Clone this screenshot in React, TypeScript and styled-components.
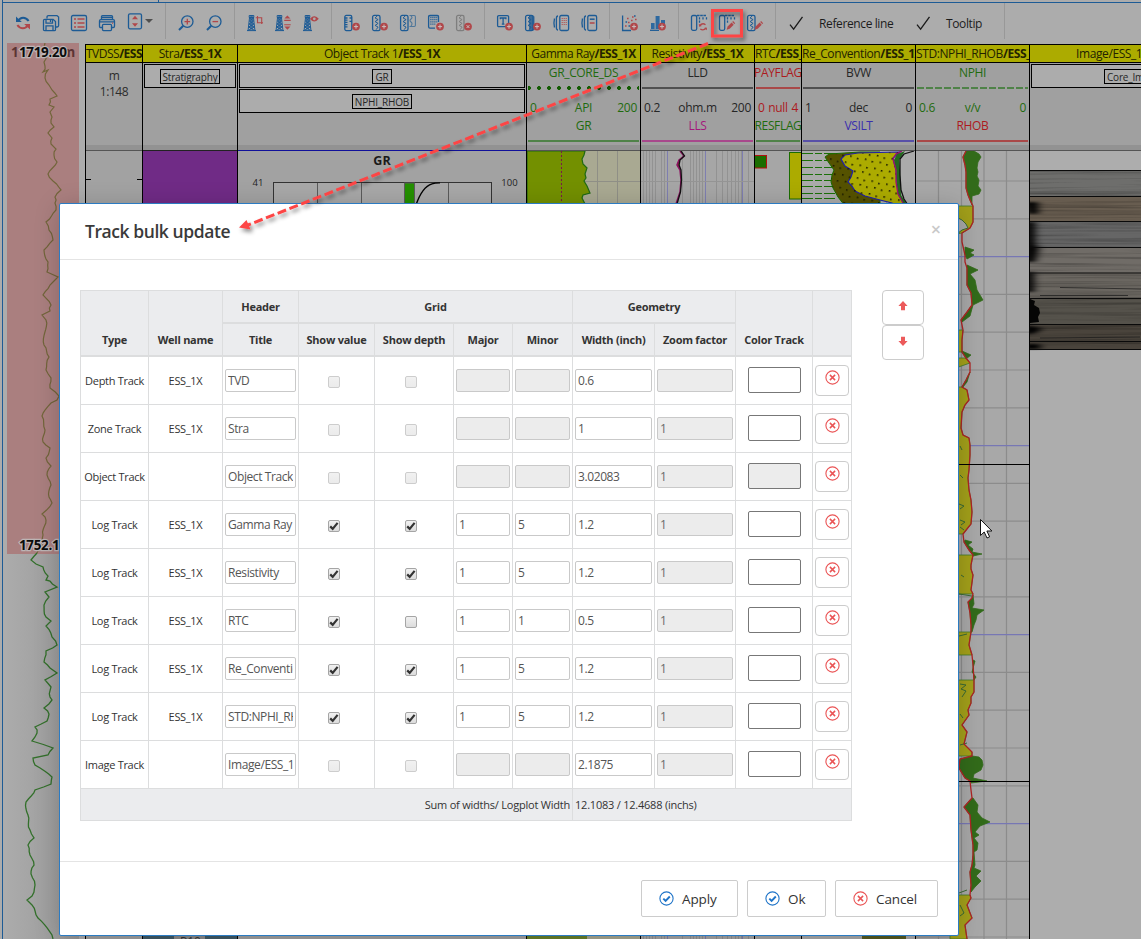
import React from "react";
import styled, { createGlobalStyle, css } from "styled-components";

const BLUE = "#1d5b95";
const RED = "#b0474a";
const LINE = "#dcddde";

const Global = createGlobalStyle`
  *, *::before, *::after { box-sizing: border-box; }
  body { margin: 0; background: #acacac; overflow: hidden; }
  body, input, button { font-family: "Open Sans", "Noto Sans", sans-serif; }
`;

/* ---------- page shell ---------- */

const Page = styled.div`
  position: relative;
  width: 1141px;
  height: 939px;
  overflow: hidden;
  background: #acacac;
  display: flex;
  flex-direction: column;
`;

const TabStrip = styled.div`
  height: 3px;
  flex: none;
  margin-left: 2px;
  border-left: 1px solid ${BLUE};
  border-bottom: 1px solid ${BLUE};
  display: flex;
`;

const TabEdge = styled.i`
  width: 156px;
  border-right: 1px solid ${BLUE};
`;

const Frame = styled.div`
  flex: 1;
  min-height: 0;
  margin-left: 2px;
  border-left: 1px solid ${BLUE};
  display: flex;
  flex-direction: column;
`;

const Toolbar = styled.div`
  height: 40px;
  flex: none;
  display: flex;
  align-items: flex-start;
`;

const Group = styled.div<{ $w?: number }>`
  height: 36px;
  padding: 0 6px;
  display: flex;
  align-items: center;
  flex: none;
  border-right: 1px solid #989898;
  ${(p) => p.$w && `width: ${p.$w}px;`}
`;

const Tool = styled.button`
  width: 28px;
  height: 36px;
  padding: 10px 4px 0;
  border: 0;
  background: none;
  display: flex;
  align-items: flex-start;
  justify-content: center;
  svg { display: block; flex: none; }
`;

const Caret = styled.i`
  border: 4px solid transparent;
  border-top-color: #4f4f4f;
  border-bottom: 0;
  margin: 0 0 0 -4px;
`;

const Toggle = styled.label<{ $w: number }>`
  display: flex;
  align-items: center;
  width: ${(p) => p.$w}px;
  padding-left: 7px;
  padding-top: 5px;
  font-size: 12px;
  color: #1c1c1c;
  white-space: nowrap;
  letter-spacing: -0.38px;
  svg { margin-right: 15px; flex: none; }
`;

const Workspace = styled.div`
  flex: 1;
  min-height: 0;
  display: flex;
`;

const Overview = styled.div`
  width: 76px;
  margin-left: 4px;
  margin-right: 2px;
  flex: none;
  svg { display: block; }
`;

/* ---------- log tracks ---------- */

const Tracks = styled.div`
  display: flex;
  flex: none;
  border-left: 1px solid #000;
  margin-top: 1px;
`;

const TrackCol = styled.section<{ $w: number }>`
  width: ${(p) => p.$w}px;
  flex: none;
  border-right: 1px solid #000;
  overflow: hidden;
  svg { display: block; }
`;

const TrackTitle = styled.h3<{ $pad?: number; $ls?: number }>`
  margin: 0;
  height: 19px;
  overflow: hidden;
  border-top: 1px solid #000;
  border-bottom: 1px solid #000;
  background: #acab00;
  color: #232300;
  font-size: 12px;
  font-weight: 400;
  line-height: 18px;
  letter-spacing: ${(p) => p.$ls ?? -0.4}px;
  white-space: nowrap;
  display: flex;
  justify-content: ${(p) => (p.$pad === undefined ? "center" : "flex-start")};
  padding-left: ${(p) => p.$pad ?? 0}px;
  b { font-weight: 700; }
`;

const TrackHead = styled.div`
  height: 87px;
  background: #a0a0a0;
  border-bottom: 5px solid #929292;
  padding: 1px;
  display: flex;
  flex-direction: column;
  color: #262626;
  font-size: 12px;
`;

const DepthUnit = styled.div`
  padding-top: 4px;
  text-align: center;
  line-height: 16px;
  color: #2c2c2c;
  letter-spacing: -0.4px;
`;

const ObjectBox = styled.div<{ $pad?: number }>`
  height: 24px;
  flex: none;
  margin: 0 0 1px;
  border: 1px solid #000;
  background: #acacac;
  display: flex;
  align-items: flex-start;
  justify-content: ${(p) => (p.$pad ? "flex-start" : "center")};
  padding: 4px 0 0 ${(p) => p.$pad ?? 0}px;
`;

const Tag = styled.span`
  height: 15px;
  border: 1px solid #000;
  padding: 0 2px;
  font-size: 10px;
  line-height: 14px;
  letter-spacing: -0.18px;
  white-space: nowrap;
`;

const CurveName = styled.div<{ $c: string }>`
  height: 18px;
  flex: none;
  line-height: 18px;
  color: ${(p) => p.$c};
  font-size: 12px;
  letter-spacing: -0.35px;
  white-space: nowrap;
  display: flex;
  justify-content: center;
`;

const CurveRule = styled.i<{ $c: string; $kind?: "dots" | "dash" }>`
  height: 2px;
  display: block;
  flex: none;
  margin-top: 5px;
  background: ${(p) =>
    p.$kind === "dash"
      ? `repeating-linear-gradient(90deg, ${p.$c} 0 7px, transparent 7px 9px)`
      : p.$c};
  ${(p) =>
    p.$kind === "dots" &&
    css`
      height: 4px;
      margin: 4px 0 -1px;
      background: radial-gradient(circle, ${p.$c} 1.7px, transparent 2.2px) -4px 0 / 10px 4px repeat-x;
    `}
`;

const ScaleRow = styled.div<{ $c: string }>`
  display: grid;
  grid-template-columns: 1fr auto 1fr;
  padding: 0 2px;
  margin-top: 10px;
  height: 18px;
  flex: none;
  line-height: 18px;
  color: ${(p) => p.$c};
  font-size: 12px;
  letter-spacing: -0.3px;
  white-space: nowrap;
  span:last-child { text-align: right; }
`;

/* ---------- dialog ---------- */

const Dialog = styled.div`
  position: absolute;
  left: 59px;
  top: 203px;
  width: 900px;
  height: 733px;
  background: #fff;
  border: 1px solid #2b7bc2;
  border-radius: 2px;
  box-shadow: 0 4px 26px rgba(0, 0, 0, 0.2);
  display: flex;
  flex-direction: column;
`;

const DialogHead = styled.header`
  height: 56px;
  flex: none;
  border-bottom: 1px solid #e4e4e4;
  padding: 0 15px 2px 25px;
  display: flex;
  justify-content: space-between;
  align-items: center;
`;

const DialogTitle = styled.h2`
  margin: 0;
  font-size: 17.5px;
  font-weight: 550;
  letter-spacing: -0.43px;
  color: #3a3a3a;
`;

const CloseButton = styled.button`
  border: 0;
  background: none;
  padding: 0;
  width: 14px;
  font-size: 18px;
  font-weight: 600;
  line-height: 18px;
  color: #c9c9c9;
  margin-top: -4px;
`;

const DialogBody = styled.div`
  flex: 1;
  display: flex;
  align-items: flex-start;
  padding: 30px 0 0 20px;
`;

const Sheet = styled.div`
  display: grid;
  grid-template-columns: 68px 74px 76px 76px 79px 59px 60px 82px 81px 77px 39px;
  grid-template-rows: 33px 33px repeat(9, 48px) 32px;
  border-top: 1px solid ${LINE};
  border-right: 1px solid ${LINE};
  font-size: 11.5px;
  color: #333;
`;

const HeadCell = styled.div<{ $span?: number; $tall?: boolean }>`
  grid-column: span ${(p) => p.$span ?? 1};
  grid-row: span ${(p) => (p.$tall ? 2 : 1)};
  background: #ebecee;
  border-left: 1px solid ${LINE};
  border-bottom: 2px solid ${LINE};
  display: flex;
  align-items: flex-end;
  justify-content: center;
  padding-bottom: 7px;
  font-size: 11px;
  font-weight: 700;
  line-height: 16px;
  letter-spacing: -0.25px;
  white-space: nowrap;
`;

const Cell = styled.div`
  border-left: 1px solid ${LINE};
  border-bottom: 1px solid ${LINE};
  padding: 0 2px;
  display: flex;
  align-items: center;
  justify-content: center;
  min-width: 0;
`;

const Label = styled.span`
  font-size: 11px;
  letter-spacing: -0.3px;
  padding-bottom: 1px;
  white-space: nowrap;
`;

const FootCell = styled.div<{ $span: number; $end?: boolean }>`
  grid-column: span ${(p) => p.$span};
  background: #ebecee;
  border-left: 1px solid ${LINE};
  border-bottom: 1px solid ${LINE};
  padding: 0 2px;
  display: flex;
  align-items: center;
  justify-content: ${(p) => (p.$end ? "flex-end" : "flex-start")};
  font-size: 11px;
  letter-spacing: -0.22px;
`;

const Field = styled.input`
  width: 100%;
  height: 23px;
  min-width: 0;
  border: 1px solid #c9c9c9;
  border-radius: 2px;
  padding: 0 2px;
  background: #fff;
  color: #555;
  font-size: 12px;
  letter-spacing: -0.4px;
  outline: 0;
  &:disabled { background: #ececec; color: #6b6b6b; }
`;

const Check = styled.span<{ $off?: boolean; $shift: number }>`
  width: 12px;
  height: 12px;
  margin: 3px ${(p) => p.$shift}px 0 0;
  border: 1px solid ${(p) => (p.$off ? "#cdcdcd" : "#a5a5a5")};
  border-radius: 2px;
  background: linear-gradient(#f1f1f1, ${(p) => (p.$off ? "#ebebeb" : "#dcdcdc")});
  display: flex;
  align-items: center;
  justify-content: center;
`;

const Swatch = styled.span<{ $off?: boolean }>`
  width: 53px;
  height: 26px;
  margin-bottom: 1px;
  border: 1px solid #777;
  border-radius: 2px;
  background: ${(p) => (p.$off ? "#ececec" : "#fff")};
`;

const SquareButton = styled.button<{ $w: number; $h: number; $lift?: number }>`
  width: ${(p) => p.$w}px;
  height: ${(p) => p.$h}px;
  flex: none;
  border: 1px solid #ccc;
  border-radius: 4px;
  background: #fff;
  padding: 0 0 ${(p) => p.$lift ?? 6}px;
  display: flex;
  align-items: center;
  justify-content: center;
`;

const OrderButtons = styled.div`
  margin-left: 30px;
  display: flex;
  flex-direction: column;
`;

const DialogFoot = styled.footer`
  height: 74px;
  flex: none;
  border-top: 1px solid #e4e4e4;
  display: flex;
  align-items: flex-start;
  justify-content: flex-end;
  gap: 9px;
  padding: 18px 20px 0 0;
`;

const ActionButton = styled.button<{ $w: number }>`
  width: ${(p) => p.$w}px;
  height: 37px;
  border: 1px solid #ccc;
  border-radius: 2px;
  background: #fff;
  color: #333;
  font-size: 13.5px;
  letter-spacing: -0.1px;
  display: flex;
  align-items: center;
  padding: 0 0 0 17px;
  gap: 8px;
  svg { flex: none; }
`;

const Annotation = styled.svg`
  position: absolute;
  left: 0;
  top: 0;
  pointer-events: none;
`;

/* ---------- icons ---------- */

const Ico = ({ children }: { children: React.ReactNode }) => (
  <svg width="20" height="20" viewBox="0 0 20 20" fill="none" stroke={BLUE} strokeWidth="1.300">
    {children}
  </svg>
);

const Plus = ({ cross }: { cross?: boolean }) => (
  <g>
    <circle cx="14" cy="13.6" r="3.9" fill={RED} stroke="none" />
    <path
      d={cross ? "M12.6 12.2l2.8 2.8M15.4 12.2l-2.8 2.8" : "M14 11.5v4.2M11.9 13.6h4.2"}
      stroke="#c9c0c0"
      strokeWidth="1"
    />
  </g>
);

const Log = ({ x = 2.6, color = BLUE }: { x?: number; color?: string }) => (
  <g stroke={color} transform={`translate(${x} 0)`}>
    <rect x="0" y="2.4" width="7.4" height="15.2" rx="1.6" />
    <path d="M4.5 3l-2 2 3 1.6-3 2 3 1.8-3 2 3 1.7-2 2.6" strokeWidth="1" />
  </g>
);

const Derrick = () => (
  <g strokeWidth="1">
    <path d="M4.6 4L3 18M8.400 4L10 18M2 17.6h9M4.2 2.5h4.6v2H4.2z" />
    <path d="M4.600 5l4 3-4.600 3 5.200 3-6 3.4M8.400 5l-4 3 4.600 3-5.400 3 6 3.4" />
    <path d="M6.5 3v13.500" strokeWidth="2.600" opacity=".75" />
  </g>
);

const Pencil = () => (
  <g stroke="none" fill={RED}>
    <path d="M9.6 16.8l1-3.200 4-4 2.100 2.100-4 4z" />
    <path d="M15.200 9l.9-.9 2.1 2.1-.9.9z" />
  </g>
);

const Columns = () => (
  <g>
    <rect x="2.5" y="2.5" width="5.2" height="14.8" rx="1.5" />
    <path d="M8 2.500h9.500" strokeDasharray="2.600 .6" />
    <path d="M10.500 4.200v2.300M14 4.200v2.300M17.500 4.200v2.300M10.500 7.500v2.300" />
  </g>
);

const icons: Record<string, React.ReactNode> = {
  refresh: (
    <>
      <path d="M5 8C7.5 3.6 12.6 3.6 15.6 8" strokeWidth="2.1" />
      <path d="M3 3.5v5.6h5.8z" fill={BLUE} stroke="none" />
      <path d="M15 12c-2.500 4.400-7.600 4.400-10.600 0" stroke={RED} strokeWidth="2.100" />
      <path d="M17 16.500v-5.600h-5.800z" fill={RED} stroke="none" />
    </>
  ),
  save: (
    <>
      <path d="M6 5.5V4q0-1.400 1.400-1.400H16L17.600 4v8.600q0 1.400-1.400 1.400H15" />
      <path d="M2.500 7.500q0-1.200 1.200-1.200h8.400L14.500 8.600v7.800q0 1.200-1.200 1.200H3.700q-1.200 0-1.200-1.200z" />
      <path d="M5 6.500v3.700h6.500V6.500M9.500 7v2M5 17.400v-4.600h7v4.600" />
    </>
  ),
  list: (
    <>
      <rect x="2.500" y="2.500" width="15" height="15" rx="1.500" />
      <path d="M5 6h2M5 10h2M5 14h2M8.500 6h7M8.500 10h7M8.500 14h7" stroke={RED} strokeWidth="1.400" />
    </>
  ),
  print: (
    <>
      <path d="M4.500 6.300V3.600q0-1 1-1h9q1 0 1 1v2.700M4.800 4.500h10.400" />
      <path d="M5.500 14.500H3.800q-1.300 0-1.300-1.300V8q0-1.400 1.300-1.400h12.400q1.300 0 1.300 1.400v5.200q0 1.300-1.300 1.300h-1.700M2.500 8.800h15" />
      <rect x="5.500" y="11.300" width="9" height="6.300" rx="1" />
      <path d="M15 10.200h1" stroke={RED} />
    </>
  ),
  fit: (
    <>
      <rect x="3.500" y=".8" width="13" height="15" rx="1.500" />
      <path d="M10 2.800l3 3.500H7zM10 13.800l3-3.500H7z" fill={RED} stroke="none" />
    </>
  ),
  zoomIn: (
    <>
      <circle cx="11.300" cy="8.600" r="5.700" />
      <path d="M7.300 12.700L3 17" strokeWidth="2" />
      <path d="M11.300 5.800v5.600M8.500 8.600h5.600" stroke={RED} />
    </>
  ),
  zoomOut: (
    <>
      <circle cx="11.300" cy="8.600" r="5.700" />
      <path d="M7.300 12.700L3 17" strokeWidth="2" />
      <path d="M8.500 8.600h5.600" stroke={RED} />
    </>
  ),
  wellCrop: (
    <>
      <Derrick />
      <path d="M12.500 3v6.700H18M10.700 4.800h6V11" stroke={RED} strokeWidth="1.100" />
    </>
  ),
  wellFit: (
    <>
      <Derrick />
      <path d="M14.400 2.600l3 3h-6zM14.400 16.800l3-3.300h-6z" fill={RED} stroke="none" />
      <path d="M11.200 7.400h6.500M11.200 11.700h6.500" stroke={RED} strokeWidth="1.100" />
    </>
  ),
  wellView: (
    <>
      <Derrick />
      <path d="M9.800 5.800q3.400-4 7 0q-3.600 4-7 0z" stroke={RED} fill={RED} />
      <circle cx="13.300" cy="5.800" r="1.400" fill="#acacac" stroke="none" />
    </>
  ),
  depthAdd: (
    <>
      <rect x="2.800" y="2.400" width="7" height="15.200" rx="1.500" />
      <path d="M3 5h2.500M3 7.200h2.500M3 9.400h2.500M3 11.600h2.500M3 13.800h2.500M7.500 5h2.500M7.500 8.300h2.500" />
      <Plus />
    </>
  ),
  logAdd: (
    <>
      <Log />
      <Plus />
    </>
  ),
  logCopy: (
    <>
      <Log />
      <path d="M11.500 2.500h4.700q1.200 0 1.200 1.200v8.600q0 1.200-1.200 1.200h-4.700M13 3q2 1.500 0 3t0 3 0 4" stroke="#4f7699" strokeWidth="1.100" />
    </>
  ),
  zoneAdd: (
    <>
      <path d="M12.500 9V3.800q0-1.300-1.300-1.300H4Q2.600 2.500 2.600 3.800v10q0 1.300 1.300 1.300H9" />
      <path d="M4.300 4.500h7M4.300 6.700h7M4.300 8.900h7M4.300 11.100h5" strokeDasharray="1.200 .8" />
      <Plus />
    </>
  ),
  logRemove: (
    <>
      <Log color="#7e7e7e" />
      <Plus cross />
    </>
  ),
  textAdd: (
    <>
      <rect x="2.600" y="2.600" width="11" height="11" rx="1.200" />
      <path d="M5.300 6.200V5h5.600v1.200M8.100 5v6M6.800 11.100h2.600" />
      <Plus />
    </>
  ),
  trackAdd: (
    <>
      <rect x="6" y="2.500" width="5.500" height="15" rx="1.500" fill="#3f6d98" stroke="none" />
      <Log />
      <Plus />
    </>
  ),
  hatch: (
    <>
      <path d="M3.500 5.500Q2.400 10 3.500 14.500M7 3Q5.400 3 5.400 5.500v9Q5.400 17 7 17" />
      <rect x="8.800" y="2.500" width="8.800" height="15" rx="1.500" />
      <path d="M11.200 5v8M13.200 5v8M15.200 5v8" stroke={RED} strokeWidth="1" strokeDasharray="1 1" />
    </>
  ),
  header: (
    <>
      <path d="M3.500 5.500Q2.400 10 3.500 14.500M7 3Q5.400 3 5.400 5.500v9Q5.400 17 7 17" />
      <rect x="8.800" y="2.500" width="8.800" height="15" rx="1.500" />
      <path d="M10.800 6.200h4.800" strokeWidth="1.500" />
      <path d="M10.800 10h4.800" stroke={RED} strokeWidth="1.500" />
    </>
  ),
  scatter: (
    <>
      <path d="M2.600 2.500v15H11" />
      <path d="M5 13h1.600M8 9.500h1.600M7 5.500h1.600M12 4h1.600M15 6.500h1.600M11 7.500h1.600" stroke={RED} strokeWidth="1.600" />
      <path d="M5.500 9h1.600M8.500 13h1.600M14 3h1.600" strokeWidth="1.600" />
      <Plus />
    </>
  ),
  bars: (
    <>
      <path d="M3 10h3.600v6H3zM7.600 3h4v13h-4zM13 7h4v4h-4z" fill="#2e69a0" stroke="none" />
      <path d="M2 17.300h9" />
      <Plus />
    </>
  ),
  colsReset: (
    <>
      <Columns />
      <path d="M10.500 12.800q3-3.500 6-1M17.300 15q-3 3.200-6 1" stroke={RED} />
      <path d="M9.800 10.800l.3 2.900 2.800-.6zM18 17.300l-.3-2.900-2.700.5z" fill={RED} stroke="none" />
    </>
  ),
  colsEdit: (
    <>
      <Columns />
      <Pencil />
    </>
  ),
  logEdit: (
    <>
      <Log />
      <Pencil />
    </>
  ),
};

const toolGroups = [
  ["zoomIn", "zoomOut"],
  ["wellCrop", "wellFit", "wellView"],
  ["depthAdd", "logAdd", "logCopy", "zoneAdd", "logRemove"],
  ["textAdd", "trackAdd", "hatch", "header"],
  ["scatter", "bars"],
  ["colsReset", "colsEdit", "logEdit"],
];

const ToolButton = ({ name }: { name: string }) => (
  <Tool aria-label={name}>
    <Ico>{icons[name]}</Ico>
  </Tool>
);

const Tick = () => (
  <svg width="15" height="15" viewBox="0 0 15 15" fill="none" stroke="#1b1b1b" strokeWidth="1.300">
    <path d="M1 8.700l3.600 4.500L13.500.8" />
  </svg>
);

const RoundCross = ({ size = 15 }: { size?: number }) => (
  <svg width={size} height={size} viewBox="0 0 15 15" fill="none" stroke="#ea5455" strokeWidth="1.100">
    <circle cx="7.500" cy="7.500" r="6.600" />
    <path d="M4.900 4.900l5.200 5.200M10.100 4.900l-5.200 5.200" strokeWidth="1.500" />
  </svg>
);

const RoundTick = () => (
  <svg width="15" height="15" viewBox="0 0 15 15" fill="none" stroke="#1f74c8" strokeWidth="1.100">
    <circle cx="7.500" cy="7.500" r="6.600" />
    <path d="M4.300 7.600l2.300 2.200 4.200-4.300" strokeWidth="1.900" />
  </svg>
);

const OrderArrow = ({ down }: { down?: boolean }) => (
  <svg width="10" height="10" viewBox="0 0 10 10" fill="#ec5a5b">
    <path d={down ? "M5 10L.4 5H3V.8h4V5h2.600z" : "M5 0l4.600 5H7v4.200H3V5H.4z"} />
  </svg>
);

/* ---------- track drawings ---------- */

type Pt = [number, number];
const toPoints = (pts: Pt[]) => pts.map((p) => p.join(",")).join(" ");

const overviewUpper: Pt[] = [[45,43],[46,55],[44,62],[45,66],[43,72],[48,70],[45,78],[49,85],[52,90],[57,96],[50,99],[49,105],[54,107],[50,112],[52,117],[51,123],[54,127],[48,133],[52,138],[51,144],[56,149],[54,155],[57,162],[48,174],[53,181],[61,190],[55,197],[55,203],[56,210],[46,222],[49,230],[53,240],[44,250],[48,262],[47,272],[58,277],[50,285],[43,295],[51,305],[50,311],[42,315],[46,320],[44,345],[49,357],[46,370],[51,378],[50,388],[59,396],[57,400],[51,403],[42,416],[45,430],[43,442],[50,448],[46,458],[51,466],[47,475],[51,485],[49,497],[52,503],[42,514],[46,520],[43,535],[42,545],[37,553]];
const overviewLower: Pt[] = [[37,553],[31,560],[36,564],[43,567],[48,576],[46,580],[50,581],[57,587],[45,592],[49,597],[44,605],[46,617],[51,621],[46,626],[52,637],[57,645],[46,651],[44,662],[50,668],[57,673],[45,680],[51,687],[50,697],[52,700],[44,708],[49,714],[47,721],[35,727],[37,733],[32,741],[53,748],[48,755],[33,758],[35,765],[52,777],[51,784],[35,790],[26,802],[28,815],[30,830],[34,838],[28,845],[30,855],[34,865],[31,874],[35,885],[32,896],[27,900],[32,905],[38,918],[52,935],[53,939]];

/* adds small side-to-side wiggle so that long spans read as a measured curve */
const roughen = (pts: Pt[]): Pt[] =>
  pts.flatMap((p, i) => {
    const n = pts[i + 1];
    if (!n || n[1] - p[1] < 5) return [p];
    const steps = Math.floor((n[1] - p[1]) / 3);
    return Array.from({ length: steps }, (_, k): Pt => {
      const t = k / steps;
      const wob = k === 0 ? 0 : Math.sin((p[1] + k * 3) * 2.3) * 1.1;
      return [+(p[0] + (n[0] - p[0]) * t + wob).toFixed(1), +(p[1] + (n[1] - p[1]) * t).toFixed(1)];
    });
  });

const rhob: Pt[] = [[966,151],[963,157],[965,165],[966,172],[966,180],[966,188],[968,195],[970,200],[973,206],[973,222],[970,228],[962,233],[962,242],[965,255],[965,262],[967,268],[967,285],[971,293],[972,305],[967,312],[961,320],[963,330],[962,340],[962,352],[966,358],[970,363],[970,372],[966,380],[962,387],[967,390],[969,400],[965,405],[962,412],[961,428],[963,435],[969,438],[970,445],[970,455],[969,470],[968,478],[969,490],[971,500],[972,512],[971,524],[963,534],[964,542],[969,550],[973,555],[971,565],[971,569],[973,575],[971,590],[973,594],[972,598],[968,602],[970,613],[971,625],[971,632],[969,645],[972,655],[973,665],[974,680],[974,692],[971,697],[971,703],[968,710],[969,715],[962,725],[967,732],[964,744],[972,752],[972,756],[960,759],[959,768],[965,778],[970,781],[971,790],[972,798],[964,807],[970,815],[971,830],[973,845],[973,855],[972,865],[970,872],[971,885],[970,895],[971,898],[967,905],[972,918],[965,925],[967,939]];

const between = (a: number, b: number) => rhob.filter((p) => p[1] >= a && p[1] <= b);

const yellowSpans: Pt[] = [[206,235],[330,352],[358,370],[387,534],[555,594],[632,655],[680,756],[895,939]];

const greenLobes: Pt[][] = [
  [[974,151],[979,154],[981,157],[978,162],[977,168],[978,172],[977,176],[979,180],[978,186],[981,190],[979,194],[972,196],[972,205]],
  [[965,247],[974,250],[970,253],[974,255],[967,259]],
  [[967,265],[978,270],[970,274],[975,280],[977,290],[983,300],[973,305],[970,316],[962,322]],
  [[962,351],[971,355],[966,359]],
  [[970,372],[967,382],[963,387]],
  [[965,540],[972,542],[968,545],[973,549],[972,552],[982,554],[973,556]],
  [[973,595],[974,604],[972,608],[984,610],[977,615],[976,620],[974,625],[972,632]],
  [[973,660],[975,661],[972,672],[976,677],[974,680]],
  [[972,756],[979,757],[982,760],[983,765],[981,770],[974,774],[973,778],[987,781],[971,783]],
  [[973,798],[978,805],[977,812],[982,818],[990,822],[980,826],[975,832],[979,835],[974,838],[978,843],[977,850],[974,852],[975,865],[974,868],[981,871],[976,876],[981,881],[975,887],[971,892]],
];

const OverviewPlot = () => (
  <svg width="76" height="896" viewBox="7 43 76 896">
    <defs>
      <linearGradient id="ov">
        <stop offset="0" stopColor="#ababab" />
        <stop offset="1" stopColor="#989898" />
      </linearGradient>
    </defs>
    <rect x="7" y="553" width="72" height="386" fill="url(#ov)" />
    <rect x="7" y="43" width="72" height="511" fill="#aa7f7f" />
    <polyline points={toPoints(roughen(overviewUpper))} fill="none" stroke="#72653a" strokeWidth="1.200" />
    <polyline points={toPoints(roughen(overviewLower))} fill="none" stroke="#33702b" strokeWidth="1.300" />
    <g fontSize="13.500" fontWeight="700">
      <text x="11" y="57" fill="#5c3434">1</text>
      <text x="62" y="57" fill="#5c3434">m</text>
      <g fill="#0c0c0c" stroke="#bdb5b5" strokeWidth="2.400" paintOrder="stroke">
        <text x="19" y="57" textLength="48">1719.20</text>
        <text x="19" y="550" textLength="48">1752.15</text>
      </g>
    </g>
  </svg>
);

const Plot = ({ x, w, bg = "#a2a2a2", top = "#555", children }: { x: number; w: number; bg?: string; top?: string; children?: React.ReactNode }) => (
  <svg width={w} height="789" viewBox={`${x} 150 ${w} 789`}>
    <rect x={x} y="150" width={w} height="789" fill={bg} />
    {children}
    <path d={`M${x} 150.500h${w}`} stroke={top} />
  </svg>
);

const DepthPlot = () => (
  <Plot x={86} w={56}>
    <path d="M86 179.500h5M137 179.500h5" stroke="#000" />
  </Plot>
);

const ZonePlot = () => (
  <Plot x={143} w={94} bg="#702b86" top="#222">
    <rect x="143" y="780" width="94" height="159" fill="#405a66" />
    <rect x="174" y="930" width="31" height="9" fill="#8a8a8a" />
    <text x="180" y="946" fontSize="12" fill="#333">P10</text>
  </Plot>
);

const ObjectPlot = () => (
  <Plot x={238} w={288} bg="#a2a2a2" top="#10109a">
    <text x="382" y="164.500" fontSize="12.500" fontWeight="700" textAnchor="middle" fill="#1a1a1a">GR</text>
    <text x="258" y="186" fontSize="9.500" textAnchor="middle" fill="#222">41</text>
    <text x="509.500" y="186" fontSize="9.500" textAnchor="middle" fill="#222">100</text>
    <rect x="273.500" y="182.500" width="218" height="120" fill="#a8a8a8" stroke="#333" />
    <path d="M317.500 183v30M361.500 183v30M448.500 183v30" stroke="#5a5a5a" />
    <rect x="404.500" y="183" width="10" height="30" fill="#249000" stroke="#5c5c5c" />
    <path d="M416 205c4-12 9-19 16-21.200 3-1 6-.9 8-.9" fill="none" stroke="#000" strokeWidth="1.400" />
  </Plot>
);

const GammaPlot = () => (
  <Plot x={527} w={113} bg="#a9a992">
    <path d="M597.500 151v60M617.500 151v60M584 181.500h56" stroke="#8f8f86" />
    <path
      d="M527 151h58l-1 4-2 4 1 5 4 4-2 6 1 4-2 3 3 5 3 7-7 2-1 3 3 6H527z"
      fill="#739000"
      stroke="#1f6a12"
      strokeWidth="1.200"
    />
    <path d="M561.500 151v60" stroke="#7d1747" strokeDasharray="2 2" />
    <path d="M527 930h60v9h-60z" fill="#68812a" />
  </Plot>
);

const resistivityLines = [643, 646, 649, 652, 655, 661, 664, 682, 690, 693, 696, 699, 702, 716, 722, 727, 731, 735, 738, 741, 748];
const ResistivityPlot = () => (
  <Plot x={641} w={113} bg="#a6a6a6">
    {resistivityLines.map((x) => (
      <path key={x} d={`M${x}.5 151v788`} stroke="#929292" />
    ))}
    <path d="M667.500 151v788M705.500 151v788M742.500 151v788" stroke="#7e7eb0" />
    <path d="M641 181.500h113" stroke="#949494" />
    <path d="M679 160q-3 5 0 8z" fill="#c0a000" stroke="#8c1060" />
    <path d="M680 151l4 5-5 4-2 5 3 5 1 10-1 12-4 12" fill="none" stroke="#8c1060" strokeWidth="1.500" />
    <path d="M681 151l3.500 5-4.500 4-1 5 2 5 .5 10-1 12-3.500 12" fill="none" stroke="#111" strokeWidth="1.300" />
  </Plot>
);

const FlagPlot = () => (
  <Plot x={755} w={46} bg="#a6a6a6">
    <rect x="753" y="155.500" width="13.500" height="12.500" fill="#1b6d00" stroke="#b01010" />
    <rect x="789.500" y="152.500" width="14" height="46.500" fill="#acab00" stroke="#1b6d00" />
  </Plot>
);

const ConventionPlot = () => (
  <Plot x={802} w={113} bg="#ababab">
    <defs>
      <pattern id="grain" width="15" height="13" patternUnits="userSpaceOnUse" patternTransform="rotate(12)">
        <rect x="1" y="2" width="1.600" height="1.600" fill="#1c1c00" />
        <rect x="9" y="1" width="1.600" height="1.600" fill="#1c1c00" />
        <rect x="5" y="8" width="1.600" height="1.600" fill="#1c1c00" />
        <rect x="12" y="9" width="1.600" height="1.600" fill="#1c1c00" />
      </pattern>
    </defs>
    <path
      d="M802 153.500h34M802 160.500h34M802 167.500h34M802 174.500h34M802 180.500h34M802 186.500h34M802 193.500h34M802 198.500h34"
      stroke="#1b7008"
      strokeDasharray="11 2 7 2"
    />
    <path d="M860 152L829 154 825 157 829 163 834 170 832 175 831 182 833 188 838 197 845 206H880V152z" fill="#555200" stroke="#1b6d00" />
    <path d="M900 152L858 153 845 155 841 159 845 166 853 171 851 177 848 182 852 186 855 191 865 196 880 200 892 203 898 207H906L899 195 897 182 896 170 893 158z" fill="#acab00" stroke="#2020a8" strokeWidth="1.200" />
    <path d="M900 152L829 154 825 157 829 163 834 170 832 175 831 182 833 188 838 197 845 206H903L899 195 897 182 896 170 893 158z" fill="url(#grain)" />
    <path d="M905 151L897 154 894 160 896 170 897 182 898 195 903 203H906L901 195 900 170 899 160 903 154z" fill="#256820" />
    <path d="M902 151L896 154 893 159 896 170 896 182 898 194 903 203" fill="none" stroke="#9c1070" strokeWidth="1.300" />
    <path d="M914 151L904 154 900 159 900 175 901 190 904 199 908 205" fill="none" stroke="#111" strokeWidth="1.300" />
    <path d="M862 930h44v9h-44z" fill="#555a20" />
  </Plot>
);

const gridRows = Array.from({ length: 21 }, (_, i) => 181 + i * 37.8);
const NeutronPlot = () => (
  <Plot x={916} w={113} bg="#a8a8a8">
    <path d="M938.500 151v788M961.500 151v788M984 151v788M1006.500 151v788" stroke="#8c8c8c" strokeWidth="1.200" />
    {gridRows.map((y, i) => (
      <path key={y} d={`M916 ${y}h113`} stroke={i % 5 === 2 ? "#7777b4" : "#8c8c8c"} strokeWidth="1.200" />
    ))}
    {yellowSpans.map(([a, b]) => (
      <polygon key={a} points={toPoints([[950, a], ...between(a, b), [950, b]])} fill="#a3a01a" stroke="#3f7a2a" strokeWidth=".8" />
    ))}
    {greenLobes.map((lobe) => {
      const a = lobe[0][1];
      const b = lobe[lobe.length - 1][1];
      return <polygon key={a} points={toPoints([...lobe, ...between(a, b).reverse()])} fill="#326b1a" stroke="#326b1a" strokeWidth=".8" />;
    })}
    <path d="M958 218l4 2 4 4 2 4-6 2-5 4z" fill="#a8a8a8" stroke="#3a6a35" />
    <path
      d="M960 446l2 4M960 475l3 3M959 504l5 2-4 3M960 520l5 2-4 3M960 527l4 3M961 575l3 2M959 594l13 2M959 636l8-2M960 684l6 1-5 4 5 2-4 6M960 714l3 4M960 745l7-2M959 893l8-3M960 905l4 8-4 3"
      fill="none"
      stroke="#3a6a35"
    />
    <polyline points={toPoints(rhob)} fill="none" stroke="#b02424" strokeWidth="1.300" />
    <path d="M916 464.500h113M916 781.500h113" stroke="#000" strokeWidth="1.200" />
  </Plot>
);

const coreSlabs: [number, number, string][] = [
  [170, 27, "#6e6e6c"],
  [197, 25, "#685d50"],
  [222, 26, "#666666"],
  [248, 25, "#706c67"],
  [273, 26, "#6b6761"],
  [299, 25, "#55524b"],
  [324, 26, "#4a443c"],
];
const ImagePlot = () => (
  <Plot x={1030} w={112} bg="#adadad">
    <defs>
      <filter id="streaks" x="0" y="0" width="1" height="1">
        <feTurbulence type="fractalNoise" baseFrequency="0.006 0.4" numOctaves="3" seed="7" />
        <feColorMatrix values="0 0 0 0 0  0 0 0 0 0  0 0 0 0 0  2.2 0 0 0 -0.95" />
      </filter>
      <filter id="soft" x="-.5" width="2">
        <feGaussianBlur stdDeviation="4 1" />
      </filter>
    </defs>
    {coreSlabs.map(([y, h, c]) => (
      <rect key={y} x="1030" y={y} width="112" height={h} fill={c} />
    ))}
    <rect x="1030" y="171" width="112" height="179" filter="url(#streaks)" opacity=".28" />
    <path
      d="M1024 202h14v12h-10zM1024 222h11v22l4 4-4 14h-11zM1024 272h10v20h-10zM1024 325l18 3-6 5-12 2zM1024 344h16v5h-16z"
      fill="#000"
      filter="url(#soft)"
    />
    <path d="M1030 299l5 2-1 4 5 3 1 5-2 4 1 5-9 1z" fill="#050505" />
    <path d="M1030 170.500h112M1030 196.500h112M1030 221.500h112M1030 247.500h112M1030 273h112M1030 298.500h112M1030 324.500h112M1030 341.500h112M1030 349.500h112" stroke="#0a0a0a" strokeWidth="1.200" />
    <path d="M1060 287.500l82 1.500M1040 295.500h88M1040 338l100-1" stroke="#1a1a1a" opacity=".7" />
  </Plot>
);

/* ---------- track headers ---------- */

type Curve = { name: string; color: string; rule: string; kind?: "dots" | "dash" };

const LogHead = ({ first, scale, second }: { first: Curve; scale: string[]; second: Curve }) => (
  <TrackHead>
    <CurveName $c={first.color}>{first.name}</CurveName>
    <CurveRule $c={first.rule} $kind={first.kind} />
    <ScaleRow $c={first.color}>
      {scale.map((s) => (
        <span key={s}>{s}</span>
      ))}
    </ScaleRow>
    <CurveName $c={second.color}>{second.name}</CurveName>
    <CurveRule $c={second.rule} $kind={second.kind} />
  </TrackHead>
);

const GREEN = "#1f6b0e";
const INK = "#262626";

/* ---------- dialog data ---------- */

type Row = {
  type: string;
  well?: string;
  title: string;
  value?: boolean | null;
  depth?: boolean | null;
  major?: string;
  minor?: string;
  width: string;
  zoom?: string;
  noColor?: boolean;
};

const W = "ESS_1X";
const rows: Row[] = [
  { type: "Depth Track", well: W, title: "TVD", value: null, depth: null, width: "0.6" },
  { type: "Zone Track", well: W, title: "Stra", value: null, depth: null, width: "1", zoom: "1" },
  { type: "Object Track", title: "Object Track 1", value: null, depth: null, width: "3.02083", zoom: "1", noColor: true },
  { type: "Log Track", well: W, title: "Gamma Ray", value: true, depth: true, major: "1", minor: "5", width: "1.2", zoom: "1" },
  { type: "Log Track", well: W, title: "Resistivity", value: true, depth: true, major: "1", minor: "5", width: "1.2", zoom: "1" },
  { type: "Log Track", well: W, title: "RTC", value: true, depth: false, major: "1", minor: "1", width: "0.5", zoom: "1" },
  { type: "Log Track", well: W, title: "Re_Convention", value: true, depth: true, major: "1", minor: "5", width: "1.2", zoom: "1" },
  { type: "Log Track", well: W, title: "STD:NPHI_RHOB", value: true, depth: true, major: "1", minor: "5", width: "1.2", zoom: "1" },
  { type: "Image Track", title: "Image/ESS_1X", value: null, depth: null, width: "2.1875", zoom: "1" },
];

const CheckBox = ({ state, shift }: { state?: boolean | null; shift: number }) => (
  <Check $off={state === null} $shift={shift}>
    {state && (
      <svg width="10" height="10" viewBox="0 0 10 10" fill="none" stroke="#333" strokeWidth="2.200">
        <path d="M1.200 5.400l2.500 2.500L8.600 1.900" />
      </svg>
    )}
  </Check>
);

const SheetRow = ({ row }: { row: Row }) => (
  <>
    <Cell><Label>{row.type}</Label></Cell>
    <Cell><Label>{row.well}</Label></Cell>
    <Cell><Field defaultValue={row.title} /></Cell>
    <Cell><CheckBox state={row.value} shift={5} /></Cell>
    <Cell><CheckBox state={row.depth} shift={6} /></Cell>
    <Cell><Field defaultValue={row.major} disabled={!row.major} /></Cell>
    <Cell><Field defaultValue={row.minor} disabled={!row.minor} /></Cell>
    <Cell><Field defaultValue={row.width} /></Cell>
    <Cell><Field defaultValue={row.zoom} disabled /></Cell>
    <Cell><Swatch $off={row.noColor} /></Cell>
    <Cell>
      <SquareButton $w={34} $h={31} aria-label="Remove"><RoundCross /></SquareButton>
    </Cell>
  </>
);

export default function App() {
  return (
    <Page>
      <Global />
      <TabStrip><TabEdge /></TabStrip>
      <Frame>
        <Toolbar>
          <Group $w={163}>
            {["refresh", "save", "list", "print", "fit"].map((n) => (
              <ToolButton key={n} name={n} />
            ))}
            <Caret />
          </Group>
          {toolGroups.map((names) => (
            <Group key={names[0]}>
              {names.map((n) => (
                <ToolButton key={n} name={n} />
              ))}
            </Group>
          ))}
          <Group $w={229}>
            <Toggle $w={127}><Tick />Reference line</Toggle>
            <Toggle $w={88}><Tick />Tooltip</Toggle>
          </Group>
        </Toolbar>
        <Workspace>
          <Overview><OverviewPlot /></Overview>
          <Tracks>
            <TrackCol $w={57}>
              <TrackTitle $pad={0} $ls={-0.5}>TVDSS<b>/ESS_1X</b></TrackTitle>
              <TrackHead><DepthUnit>m<br />1:148</DepthUnit></TrackHead>
              <DepthPlot />
            </TrackCol>
            <TrackCol $w={95}>
              <TrackTitle>Stra<b>/ESS_1X</b></TrackTitle>
              <TrackHead><ObjectBox><Tag>Stratigraphy</Tag></ObjectBox></TrackHead>
              <ZonePlot />
            </TrackCol>
            <TrackCol $w={289}>
              <TrackTitle>Object Track 1<b>/ESS_1X</b></TrackTitle>
              <TrackHead>
                <ObjectBox><Tag>GR</Tag></ObjectBox>
                <ObjectBox><Tag>NPHI_RHOB</Tag></ObjectBox>
              </TrackHead>
              <ObjectPlot />
            </TrackCol>
            <TrackCol $w={114}>
              <TrackTitle $ls={-0.48}>Gamma Ray<b>/ESS_1X</b></TrackTitle>
              <LogHead
                first={{ name: "GR_CORE_DS", color: GREEN, rule: "#145c04", kind: "dots" }}
                scale={["0", "API", "200"]}
                second={{ name: "GR", color: GREEN, rule: "#4f8248" }}
              />
              <GammaPlot />
            </TrackCol>
            <TrackCol $w={114}>
              <TrackTitle $ls={-0.45}>Resistivity<b>/ESS_1X</b></TrackTitle>
              <LogHead
                first={{ name: "LLD", color: INK, rule: "#505050" }}
                scale={["0.2", "ohm.m", "200"]}
                second={{ name: "LLS", color: "#a3187c", rule: "#a8488c" }}
              />
              <ResistivityPlot />
            </TrackCol>
            <TrackCol $w={47}>
              <TrackTitle $pad={0}>RTC<b>/ESS_1X</b></TrackTitle>
              <LogHead
                first={{ name: "PAYFLAG", color: "#ad1a1e", rule: "#a94848" }}
                scale={["0", "null", "4"]}
                second={{ name: "RESFLAG", color: GREEN, rule: "#4f8248" }}
              />
              <FlagPlot />
            </TrackCol>
            <TrackCol $w={114}>
              <TrackTitle $pad={0}>Re_Convention<b>/ESS_1X</b></TrackTitle>
              <LogHead
                first={{ name: "BVW", color: INK, rule: "#505050" }}
                scale={["1", "dec", "0"]}
                second={{ name: "VSILT", color: "#3a2fae", rule: "#5850a8" }}
              />
              <ConventionPlot />
            </TrackCol>
            <TrackCol $w={114}>
              <TrackTitle $pad={0}>STD:NPHI_RHOB<b>/ESS_1X</b></TrackTitle>
              <LogHead
                first={{ name: "NPHI", color: GREEN, rule: "#4f8248", kind: "dash" }}
                scale={["0.6", "v/v", "0"]}
                second={{ name: "RHOB", color: "#ad1a1e", rule: "#a94848" }}
              />
              <NeutronPlot />
            </TrackCol>
            <TrackCol $w={210}>
              <TrackTitle $pad={46}>Image/ESS_1X</TrackTitle>
              <TrackHead><ObjectBox $pad={72}><Tag>Core_Image</Tag></ObjectBox></TrackHead>
              <ImagePlot />
            </TrackCol>
          </Tracks>
        </Workspace>
      </Frame>

      <Dialog role="dialog">
        <DialogHead>
          <DialogTitle>Track bulk update</DialogTitle>
          <CloseButton aria-label="Close">×</CloseButton>
        </DialogHead>
        <DialogBody>
          <Sheet>
            <HeadCell $tall>Type</HeadCell>
            <HeadCell $tall>Well name</HeadCell>
            <HeadCell>Header</HeadCell>
            <HeadCell $span={4}>Grid</HeadCell>
            <HeadCell $span={2}>Geometry</HeadCell>
            <HeadCell $tall>Color Track</HeadCell>
            <HeadCell $tall />
            <HeadCell>Title</HeadCell>
            <HeadCell>Show value</HeadCell>
            <HeadCell>Show depth</HeadCell>
            <HeadCell>Major</HeadCell>
            <HeadCell>Minor</HeadCell>
            <HeadCell>Width (inch)</HeadCell>
            <HeadCell>Zoom factor</HeadCell>
            {rows.map((r) => (
              <SheetRow key={r.title} row={r} />
            ))}
            <FootCell $span={7} $end>Sum of widths/ Logplot Width</FootCell>
            <FootCell $span={4}>12.1083 / 12.4688 (inchs)</FootCell>
          </Sheet>
          <OrderButtons>
            <SquareButton $w={42} $h={35} $lift={3} aria-label="Move up"><OrderArrow /></SquareButton>
            <SquareButton $w={42} $h={35} $lift={3} aria-label="Move down"><OrderArrow down /></SquareButton>
          </OrderButtons>
        </DialogBody>
        <DialogFoot>
          <ActionButton $w={97}><RoundTick />Apply</ActionButton>
          <ActionButton $w={79}><RoundTick />Ok</ActionButton>
          <ActionButton $w={103}><RoundCross />Cancel</ActionButton>
        </DialogFoot>
      </Dialog>

      <Annotation width="1141" height="939" viewBox="0 0 1141 939">
        <defs>
          <filter id="drop" x="-10%" y="-10%" width="120%" height="130%">
            <feDropShadow dx="2" dy="3" stdDeviation="2" floodColor="#000" floodOpacity=".45" />
          </filter>
        </defs>
        <g filter="url(#drop)">
          <rect x="712.500" y="10.500" width="29" height="25.500" fill="none" stroke="#fd4545" strokeWidth="3" />
          <path d="M708 43.500L248 225" stroke="#fd4545" strokeWidth="3" strokeDasharray="9 3.600" />
          <path d="M239 227.500l7.500-7.500 4 9.500z" fill="#fd4545" />
        </g>
        <path d="M980.500 519.500v16l3.700-3.500 2.800 6 2.600-1.200-2.700-5.800h5z" fill="#fff" stroke="#111" strokeWidth="1" />
      </Annotation>
    </Page>
  );
}
